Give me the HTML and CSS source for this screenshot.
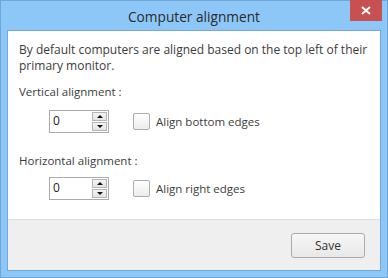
FILE: index.html
```html
<!DOCTYPE html>
<html>
<head>
<meta charset="utf-8">
<link rel="stylesheet" href="styles.css">
</head>
<body>
<div class="window">
  <div class="titlebar">
    <span class="title">Computer alignment</span>
    <div class="close">
      <svg width="10" height="9" viewBox="0 0 10 9"><path d="M1 1 L9 8 M9 1 L1 8" stroke="#fff" stroke-width="2" fill="none"/></svg>
    </div>
  </div>
  <div class="client">
    <div class="main">
      <p class="desc">By default computers are aligned based on the top left of their primary monitor.</p>
      <div class="label first">Vertical alignment :</div>
      <div class="field first">
        <div class="spinner">
          <span class="value">0</span>
          <div class="spin">
            <div class="btn"><span class="tri up"></span></div>
            <div class="btn"><span class="tri down"></span></div>
          </div>
        </div>
        <div class="check"><span class="box"></span><span>Align bottom edges</span></div>
      </div>
      <div class="label second">Horizontal alignment :</div>
      <div class="field second">
        <div class="spinner">
          <span class="value">0</span>
          <div class="spin">
            <div class="btn"><span class="tri up"></span></div>
            <div class="btn"><span class="tri down"></span></div>
          </div>
        </div>
        <div class="check"><span class="box"></span><span>Align right edges</span></div>
      </div>
    </div>
    <div class="footer">
      <button class="save">Save</button>
    </div>
  </div>
</div>
</body>
</html>
```
FILE: styles.css
```css
html, body { margin: 0; padding: 0; }
body { width: 388px; height: 278px; overflow: hidden; font-family: "Open Sans", "Noto Sans", sans-serif; }
.window {
  position: relative;
  width: 388px; height: 278px; box-sizing: border-box;
  border: 1px solid #6fa6d8;
  background: #8dc7f7;
  padding: 0 6px 6px;
  display: flex; flex-direction: column;
}
.titlebar {
  height: 29px; flex: none;
  display: flex; align-items: center; justify-content: center;
}
.title { font-size: 13.7px; color: #2a2a2a; margin-top: 1px; }
.close {
  position: absolute; top: -1px; right: 5px;
  width: 32px; height: 21px;
  background: #c75050;
  display: flex; align-items: center; justify-content: center;
}
.client {
  flex: 1;
  border: 1px solid #72a8da;
  background: #fff;
  display: flex; flex-direction: column;
}
.main { flex: 1; padding: 11px 11px 0 11px; color: #3c3c3c; font-size: 11.5px; }
.desc { margin: 0; line-height: 16px; font-size: 12px; }
.label { line-height: 15px; }
.label.first { margin-top: 10px; }
.label.second { margin-top: 20px; }
.field { display: flex; align-items: center; padding-left: 30px; }
.field.first { margin-top: 11px; }
.field.second { margin-top: 9px; }
.spinner {
  width: 60px; height: 23px; box-sizing: border-box;
  border: 1px solid #ababab; background: #fff;
  display: flex; justify-content: space-between;
}
.value { font-size: 12px; color: #222; padding: 2px 0 0 3px; line-height: 15px; }
.spin { display: flex; flex-direction: column; gap: 1px; padding: 1px 1px 1px 0; }
.btn {
  width: 15px; height: 9px; box-sizing: border-box;
  border: 1px solid #b5b5b5;
  background: linear-gradient(#f4f4f4, #e4e4e4);
  display: flex; align-items: center; justify-content: center;
}
.tri { width: 0; height: 0; border-left: 3px solid transparent; border-right: 3px solid transparent; }
.tri.up { border-bottom: 3px solid #111; }
.tri.down { border-top: 3px solid #111; }
.check { display: flex; align-items: center; margin-left: 24px; gap: 6px; font-size: 11.5px; color: #3c3c3c; }
.box {
  width: 17px; height: 17px; box-sizing: border-box;
  border: 1px solid #adadad; border-radius: 2px;
  background: linear-gradient(#fff, #ececec);
}
.footer {
  height: 51px; flex: none;
  border-top: 1px solid #dfdfdf;
  background: #efefef;
  display: flex; align-items: flex-start; justify-content: flex-end;
  padding: 13px 15px 0 0; box-sizing: border-box;
}
.save {
  width: 74px; height: 25px;
  border: 1px solid #acacac; border-radius: 3px;
  background: linear-gradient(#f7f7f7, #e8e8e8);
  font-family: inherit; font-size: 12px; color: #333;
  padding: 0;
}
```
